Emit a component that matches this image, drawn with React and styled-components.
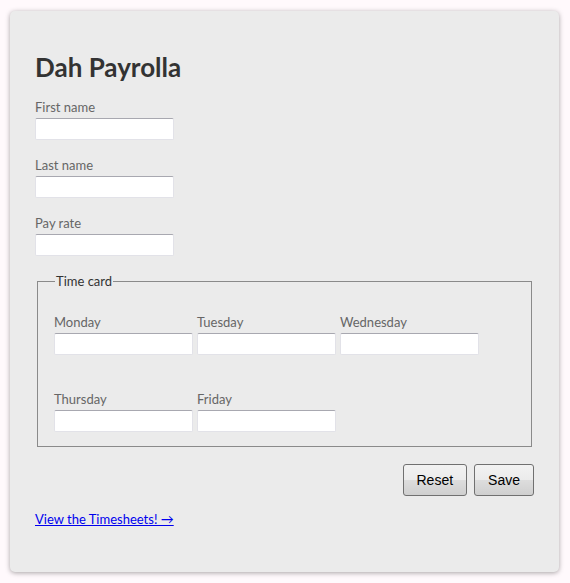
import React from "react";
import styled, { createGlobalStyle } from "styled-components";

const Global = createGlobalStyle`
  html, body { margin: 0; padding: 0; background: #fff9fc; }
  body { padding: 11px 10px; font-family: Lato, "Open Sans", sans-serif; }
  * { box-sizing: border-box; }
`;

const Card = styled.div`
  width: 549px;
  height: 561px;
  background: #ebebeb;
  border-radius: 5px;
  box-shadow: 0 1px 5px rgba(0,0,0,0.35);
  padding: 40px 25px 30px 25px;
`;

const Title = styled.h1`
  margin: 0 0 16px 0;
  font-size: 26px;
  line-height: 32px;
  font-weight: 700;
  color: #333333;
`;

const Field = styled.div`
  margin-bottom: 17px;
`;

const Label = styled.label`
  display: block;
  margin-bottom: 2px;
  font-size: 13px;
  line-height: 17px;
  color: #666666;
`;

const Input = styled.input`
  display: block;
  width: 139px;
  height: 22px;
  margin: 0;
  border: 1px solid #e2e2e8;
  border-top-color: #a8a8b0;
  border-radius: 2px;
  background: #ffffff;
`;

const Fieldset = styled.fieldset`
  margin: 10px 2px 0 2px;
  padding: 25px 16px 14px 16px;
  border: 1px solid #8a8a8a;
  border-radius: 0;
`;

const Legend = styled.legend`
  padding: 0 1px;
  margin-left: 1px;
  font-size: 13px;
  color: #333333;
`;

const Row = styled.div`
  display: flex;
  gap: 4px;
  margin-bottom: ${(p) => p.$gap || "0"};
`;

const Actions = styled.div`
  display: flex;
  justify-content: flex-end;
  gap: 7px;
  margin: 17px 0 0 0;
`;

const Button = styled.button`
  height: 32px;
  padding: 0 13px;
  font-family: "Liberation Sans", Arial, sans-serif;
  font-size: 14px;
  color: #000;
  border: 1px solid #707070;
  border-radius: 3px;
  background: linear-gradient(to bottom, #f2f2f2 0%, #ebebeb 50%, #dddddd 51%, #cfcfcf 100%);
`;

const Link = styled.a`
  display: inline-block;
  margin-top: 15px;
  font-size: 13px;
  color: #0000ee;
  text-decoration: underline;
`;

export default function App() {
  return (
    <>
      <Global />
      <Card>
        <Title>Dah Payrolla</Title>
        <Field>
          <Label>First name</Label>
          <Input />
        </Field>
        <Field>
          <Label>Last name</Label>
          <Input />
        </Field>
        <Field>
          <Label>Pay rate</Label>
          <Input />
        </Field>
        <Fieldset>
          <Legend>Time card</Legend>
          <Row $gap="36px">
            <div>
              <Label>Monday</Label>
              <Input />
            </div>
            <div>
              <Label>Tuesday</Label>
              <Input />
            </div>
            <div>
              <Label>Wednesday</Label>
              <Input />
            </div>
          </Row>
          <Row>
            <div>
              <Label>Thursday</Label>
              <Input />
            </div>
            <div>
              <Label>Friday</Label>
              <Input />
            </div>
          </Row>
        </Fieldset>
        <Actions>
          <Button>Reset</Button>
          <Button>Save</Button>
        </Actions>
        <Link href="#">View the Timesheets! →</Link>
      </Card>
    </>
  );
}
